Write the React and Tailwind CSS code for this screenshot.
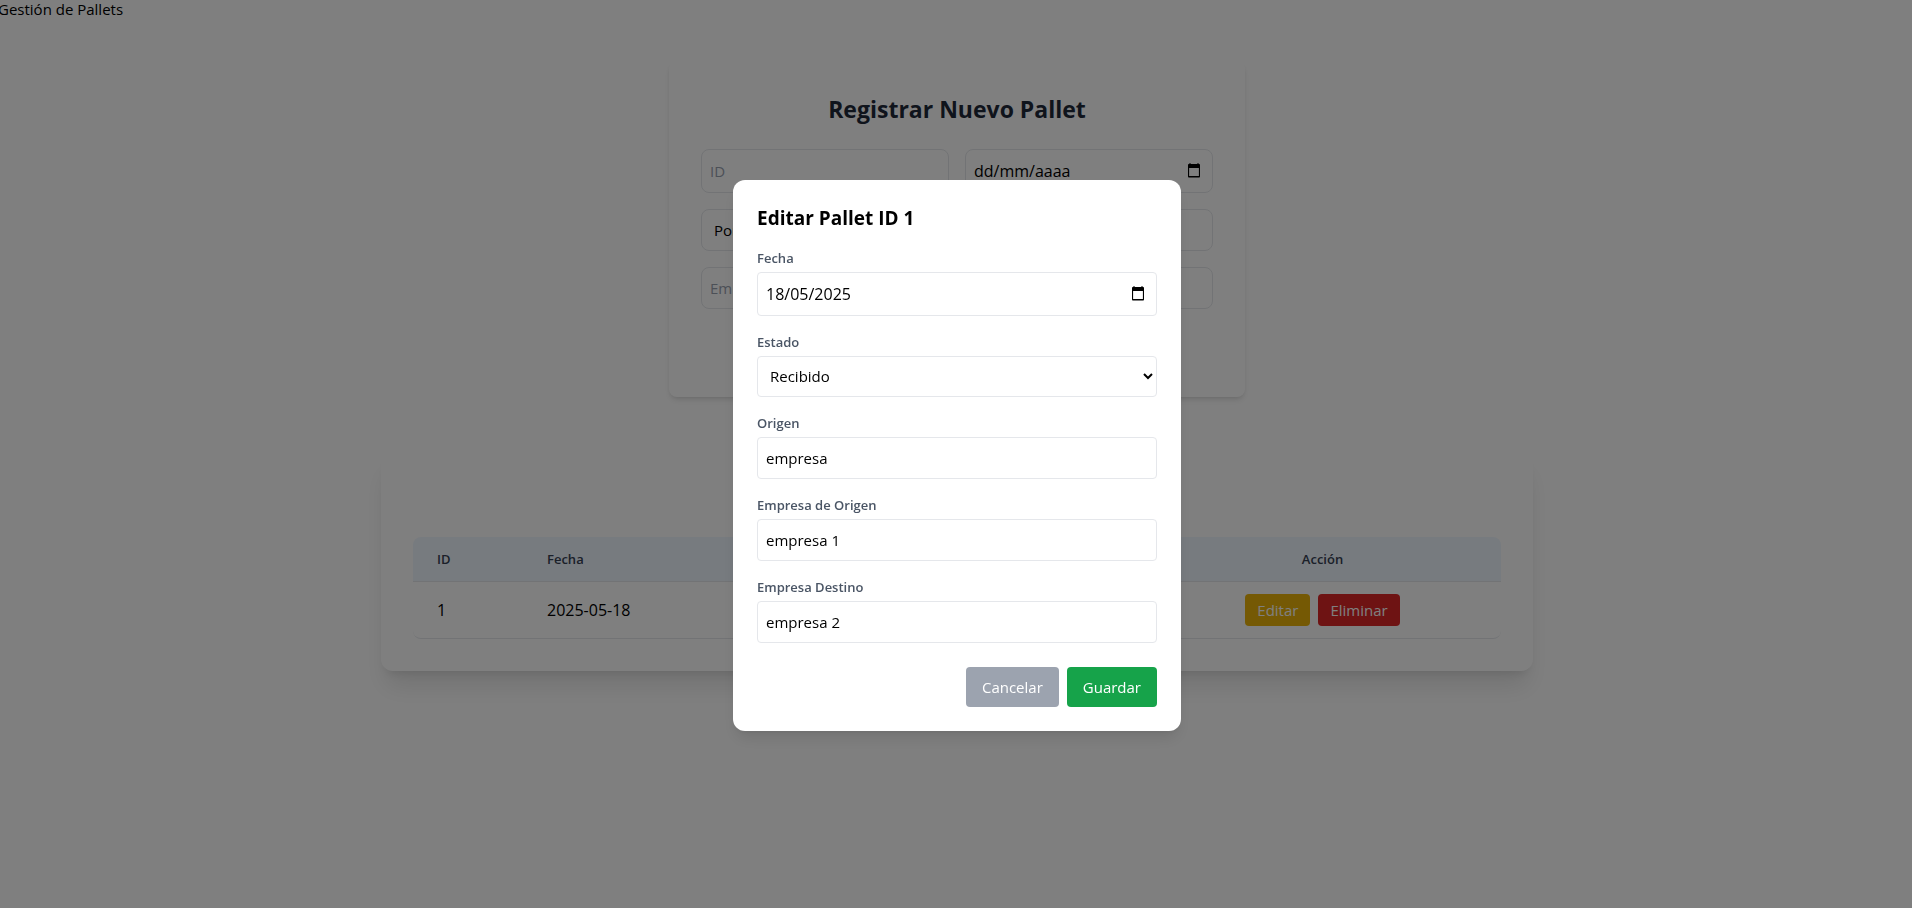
function CalendarIcon() {
  return (
    <svg viewBox="0 0 16 16" className="size-4" fill="currentColor" aria-hidden="true">
      <path fillRule="evenodd" d="M3.5 0h1v1h7V0h1v1h.7c.5 0 .8.4.8.9v11.7c0 .5-.3.9-.8.9H2.8c-.5 0-.8-.4-.8-.9V1.900c0-.5.3-.9.8-.9h.7zM3.100 5v8h9.800V5z" />
    </svg>
  );
}

function DateField({ id, label, className, ...props }) {
  return (
    <div className={"flex h-11 items-center border border-gray-200 pr-2.5 pl-2 " + className}>
      <input id={id} type="text" aria-label={label} className="min-w-0 flex-1 bg-transparent text-base outline-none placeholder:text-black" {...props} />
      <button type="button" aria-label="Abrir calendario">
        <CalendarIcon />
      </button>
    </div>
  );
}

function Field({ id, label, children }) {
  return (
    <div className="mb-4">
      <label htmlFor={id} className="mb-1 block text-[13px] leading-5 font-semibold text-gray-600">
        {label}
      </label>
      {children}
    </div>
  );
}

const formInput = "h-[42px] w-full rounded-lg border border-gray-200 px-2 placeholder:text-gray-400";
const modalInput = "h-[42px] w-full rounded-sm border border-gray-200 px-2";

function RegisterForm() {
  return (
    <section className="mx-auto mt-10 w-full max-w-xl rounded-lg bg-white p-8 shadow-md">
      <h2 className="mb-6 text-center text-[23px] leading-8 font-bold text-gray-800">Registrar Nuevo Pallet</h2>
      <form className="grid grid-cols-2 gap-4">
        <input aria-label="ID" placeholder="ID" className="h-11 w-full rounded-lg border border-gray-200 px-2 placeholder:text-gray-400" />
        <DateField id="new-date" label="Fecha" placeholder="dd/mm/aaaa" className="rounded-lg" />
        <select aria-label="Estado" className="h-[42px] w-full rounded-lg border border-gray-200 bg-white px-2">
          <option>Por recibir</option>
          <option>Recibido</option>
        </select>
        <input aria-label="Origen" className={formInput} />
        <input aria-label="Empresa de Origen" placeholder="Empresa de Origen" className={formInput} />
        <input aria-label="Empresa Destino" className={formInput} />
        <button type="button" className="col-span-2 h-10 justify-self-center rounded-sm bg-blue-600 px-4 text-white">
          Registrar
        </button>
      </form>
    </section>
  );
}

function PalletTable() {
  return (
    <section className="mx-auto mt-13 w-full max-w-6xl rounded-xl bg-white p-8 shadow-xl">
      <h2 className="mb-6 text-center text-[23px] leading-8 font-bold text-gray-800">Pallets</h2>
      <table className="w-full table-fixed border-separate border-spacing-0 text-left">
        <colgroup>
          <col className="w-[110px]" />
          <col className="w-[220px]" />
          <col />
          <col />
          <col className="w-[357px]" />
        </colgroup>
        <thead className="text-[13px] leading-5 text-gray-700">
          <tr>
            <th className="rounded-tl-lg border-b border-gray-200 bg-blue-50 px-6 py-3 font-semibold">ID</th>
            <th className="border-b border-gray-200 bg-blue-50 px-6 py-3 font-semibold">Fecha</th>
            <th className="border-b border-gray-200 bg-blue-50 px-6 py-3 font-semibold">Estado</th>
            <th className="border-b border-gray-200 bg-blue-50 px-6 py-3 font-semibold">Origen</th>
            <th className="rounded-tr-lg border-b border-gray-200 bg-blue-50 px-6 py-3 text-center font-semibold">Acción</th>
          </tr>
        </thead>
        <tbody>
          <tr>
            <td className="rounded-bl-lg border-b border-gray-200 px-6 py-3 text-base">1</td>
            <td className="border-b border-gray-200 px-6 py-3 text-base">2025-05-18</td>
            <td className="border-b border-gray-200 px-6 py-3">Recibido</td>
            <td className="border-b border-gray-200 px-6 py-3">empresa</td>
            <td className="rounded-br-lg border-b border-gray-200 px-6 py-3">
              <div className="flex justify-center gap-2">
                <button type="button" className="rounded-sm bg-[#eab308] px-3 py-1 text-white">Editar</button>
                <button type="button" className="rounded-sm bg-[#dc2626] px-3 py-1 text-white">Eliminar</button>
              </div>
            </td>
          </tr>
        </tbody>
      </table>
    </section>
  );
}

function EditModal() {
  return (
    <div className="fixed -top-0.5 -right-1 -bottom-1 -left-0.5 flex items-center justify-center bg-black/50">
      <div role="dialog" aria-modal="true" aria-labelledby="edit-title" className="w-full max-w-md rounded-xl bg-white p-6 shadow-lg">
        <h3 id="edit-title" className="mb-4 text-[19px] leading-7 font-bold">Editar Pallet ID 1</h3>
        <form>
          <Field id="edit-date" label="Fecha">
            <DateField id="edit-date" label="Fecha" defaultValue="18/05/2025" className="rounded-sm" />
          </Field>
          <Field id="edit-state" label="Estado">
            <select id="edit-state" className="h-[41px] w-full rounded-sm border border-gray-200 bg-white px-2">
              <option>Recibido</option>
              <option>Por recibir</option>
            </select>
          </Field>
          <Field id="edit-origin" label="Origen">
            <input id="edit-origin" defaultValue="empresa" className={modalInput} />
          </Field>
          <Field id="edit-from" label="Empresa de Origen">
            <input id="edit-from" defaultValue="empresa 1" className={modalInput} />
          </Field>
          <Field id="edit-to" label="Empresa Destino">
            <input id="edit-to" defaultValue="empresa 2" className={modalInput} />
          </Field>
          <div className="mt-6 flex justify-end gap-2">
            <button type="button" className="rounded-sm bg-[#9ca3af] px-4 py-2 text-white">Cancelar</button>
            <button type="button" className="rounded-sm bg-[#16a34a] px-4 py-2 text-white">Guardar</button>
          </div>
        </form>
      </div>
    </div>
  );
}

export default function App() {
  return (
    <div className='min-h-screen overflow-hidden bg-white font-["Open_Sans","Noto_Sans",sans-serif] text-[15px] leading-6 text-black'>
      <main className="-mt-[3px] -mr-1 -ml-0.5">
        <h1>Gestión de Pallets</h1>
        <RegisterForm />
        <PalletTable />
      </main>
      <EditModal />
    </div>
  );
}
